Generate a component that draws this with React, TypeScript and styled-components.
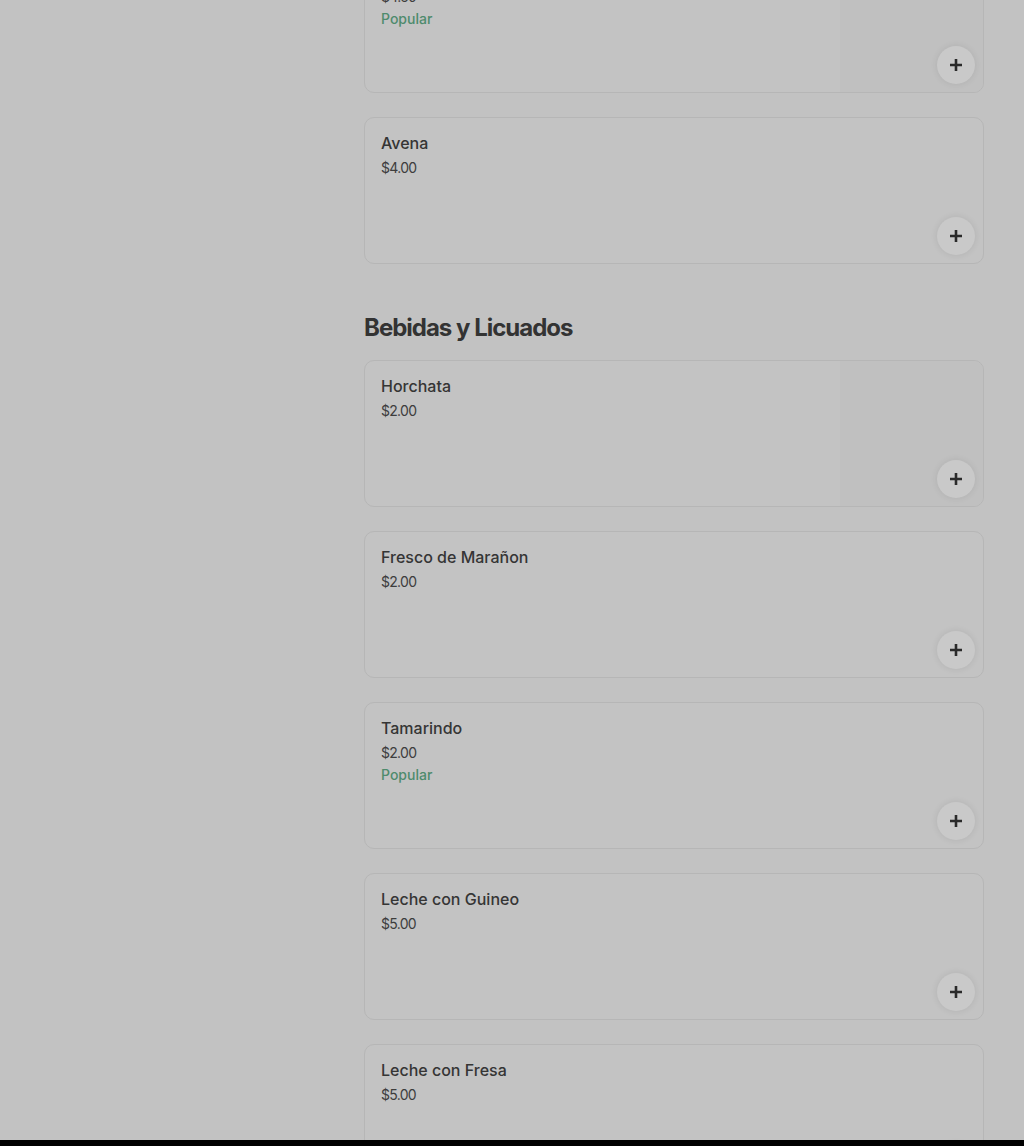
import React from "react";
import styled, { createGlobalStyle } from "styled-components";

const Global = createGlobalStyle`
  html, body { margin: 0; padding: 0; background: #000; }
  body { font-family: Inter, "Noto Sans", "Liberation Sans", sans-serif; -webkit-font-smoothing: antialiased; }
`;

const Viewport = styled.div`
  height: 1140px;
  overflow: hidden;
  background: #c2c2c2;
`;

const Layout = styled.div`
  display: grid;
  grid-template-columns: 364px 620px;
`;

const Sidebar = styled.aside``;

const Main = styled.main`
  margin-top: -54px;
  display: flex;
  flex-direction: column;
`;

const Section = styled.section<{ $first?: boolean }>`
  display: flex;
  flex-direction: column;
  padding-top: ${(p) => (p.$first ? "0" : "48px")};
`;

const Heading = styled.h2`
  margin: 0 0 16px;
  font-size: 24px;
  line-height: 32px;
  font-weight: 700;
  letter-spacing: -1px;
  color: #333;
`;

const List = styled.div`
  display: flex;
  flex-direction: column;
  gap: 24px;
`;

const Card = styled.div`
  position: relative;
  box-sizing: border-box;
  height: 147px;
  display: flex;
  border: 1px solid #b6b6b6;
  border-radius: 10px;
  background: #c3c3c3;
  overflow: hidden;
`;

const Info = styled.div`
  flex: 1;
  padding: 15px 16px 0;
  display: flex;
  flex-direction: column;
`;

const Name = styled.div`
  font-size: 16px;
  line-height: 20px;
  font-weight: 500;
  color: #353535;
`;

const Price = styled.div`
  margin-top: 5px;
  font-size: 14px;
  line-height: 20px;
  font-weight: 400;
  color: #3d3d3d;
  letter-spacing: -0.7px;
`;

const Tag = styled.div`
  margin-top: 2px;
  font-size: 14px;
  line-height: 20px;
  font-weight: 500;
  color: #4e8b6d;
`;

const Thumb = styled.div`
  width: 143px;
  flex-shrink: 0;
  background: #c0c0c0;
`;

const AddButton = styled.button`
  position: absolute;
  right: 8px;
  bottom: 8px;
  width: 38px;
  height: 38px;
  border: none;
  border-radius: 50%;
  background: #c9c9c9;
  box-shadow: 0 0 7px rgba(0, 0, 0, 0.09);
  display: flex;
  align-items: center;
  justify-content: center;
  padding: 0;
  color: #2a2a2a;
`;

type Item = { name: string; price: string; popular?: boolean; image?: boolean };

const sections: { title?: string; items: Item[] }[] = [
  {
    items: [
      { name: "Café con Leche", price: "$4.50", popular: true, image: true },
      { name: "Avena", price: "$4.00" },
    ],
  },
  {
    title: "Bebidas y Licuados",
    items: [
      { name: "Horchata", price: "$2.00", image: true },
      { name: "Fresco de Marañon", price: "$2.00" },
      { name: "Tamarindo", price: "$2.00", popular: true },
      { name: "Leche con Guineo", price: "$5.00" },
      { name: "Leche con Fresa", price: "$5.00" },
    ],
  },
];

const Plus = () => (
  <svg width="12" height="12" viewBox="0 0 12 12" aria-hidden>
    <path d="M4.7 0h2.6v4.7H12v2.6H7.3V12H4.7V7.3H0V4.7h4.7z" fill="currentColor" />
  </svg>
);

export default function App() {
  return (
    <>
      <Global />
      <Viewport>
        <Layout>
          <Sidebar />
          <Main>
            {sections.map((s, i) => (
              <Section key={i} $first={!s.title}>
                {s.title && <Heading>{s.title}</Heading>}
                <List>
                  {s.items.map((it) => (
                    <Card key={it.name}>
                      <Info>
                        <Name>{it.name}</Name>
                        <Price>{it.price}</Price>
                        {it.popular && <Tag>Popular</Tag>}
                      </Info>
                      {it.image && <Thumb />}
                      <AddButton aria-label="Agregar">
                        <Plus />
                      </AddButton>
                    </Card>
                  ))}
                </List>
              </Section>
            ))}
          </Main>
        </Layout>
      </Viewport>
    </>
  );
}
